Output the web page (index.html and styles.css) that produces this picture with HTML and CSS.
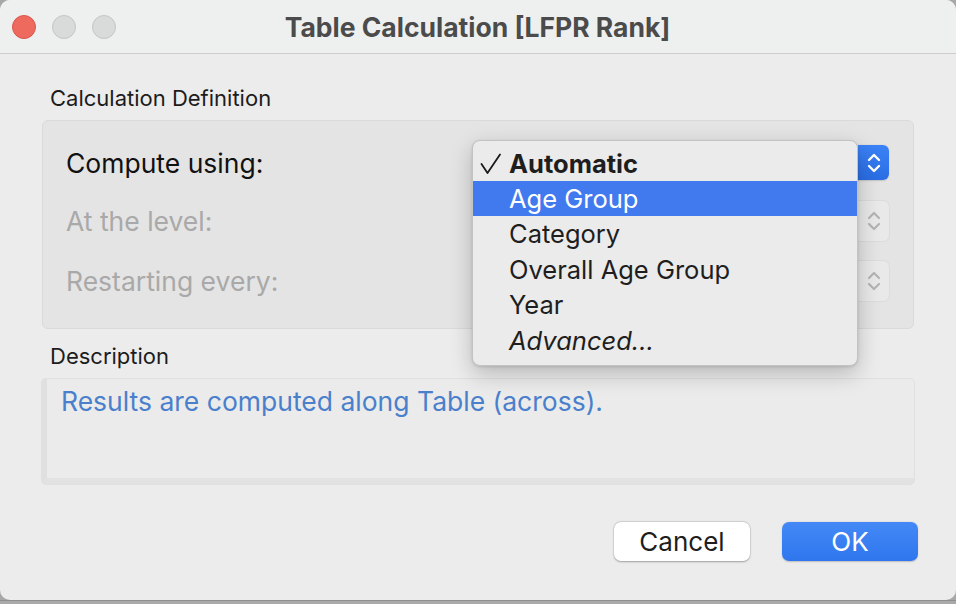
FILE: index.html
```html
<!DOCTYPE html>
<html>
<head>
<meta charset="utf-8">
<link rel="stylesheet" href="styles.css">
</head>
<body>
<div class="window">
  <div class="titlebar">
    <div class="lights">
      <span class="light red"></span>
      <span class="light"></span>
      <span class="light"></span>
    </div>
    <div class="title">Table Calculation [LFPR Rank]</div>
  </div>
  <div class="content">
    <div class="section-label">Calculation Definition</div>
    <div class="panel">
      <div class="row row-first">
        <div class="label">Compute using:</div>
        <div class="popup">
          <div class="stepper active">
            <svg width="16" height="24" viewBox="0 0 16 24"><path d="M3 9 L8 4 L13 9 M3 15 L8 20 L13 15" fill="none" stroke="#fff" stroke-width="2.4" stroke-linecap="round" stroke-linejoin="round"/></svg>
          </div>
        </div>
      </div>
      <div class="row">
        <div class="label disabled">At the level:</div>
        <div class="popup tall">
          <div class="stepper">
            <svg width="16" height="24" viewBox="0 0 16 24"><path d="M3 9 L8 4 L13 9 M3 15 L8 20 L13 15" fill="none" stroke="#b4b4b4" stroke-width="2.2" stroke-linecap="round" stroke-linejoin="round"/></svg>
          </div>
        </div>
      </div>
      <div class="row">
        <div class="label disabled">Restarting every:</div>
        <div class="popup tall">
          <div class="stepper">
            <svg width="16" height="24" viewBox="0 0 16 24"><path d="M3 9 L8 4 L13 9 M3 15 L8 20 L13 15" fill="none" stroke="#b4b4b4" stroke-width="2.2" stroke-linecap="round" stroke-linejoin="round"/></svg>
          </div>
        </div>
      </div>
    </div>
    <div class="section-label desc-label">Description</div>
    <div class="desc-box">Results are computed along Table (across).</div>
    <div class="buttons">
      <button class="btn cancel">Cancel</button>
      <button class="btn ok">OK</button>
    </div>
  </div>
  <div class="menu">
    <div class="item checked">
      <svg class="check" width="22" height="22" viewBox="0 0 22 22"><path d="M1.5 11 L7.5 20 L20 1.5" fill="none" stroke="#1a1a1a" stroke-width="1.8" stroke-linecap="round" stroke-linejoin="round"/></svg>
      <span>Automatic</span>
    </div>
    <div class="item selected">Age Group</div>
    <div class="item">Category</div>
    <div class="item">Overall Age Group</div>
    <div class="item">Year</div>
    <div class="item italic">Advanced...</div>
  </div>
</div>
<div class="backdrop"></div>
</body>
</html>
```

FILE: styles.css
```css
html, body {
  margin: 0;
  padding: 0;
}
body {
  width: 956px;
  height: 604px;
  background: #a7a7a7;
  overflow: hidden;
  font-family: "Inter", "Noto Sans", sans-serif;
}
.window {
  position: relative;
  width: 956px;
  height: 600px;
  background: #ececec;
  border-radius: 10px;
  overflow: hidden;
  display: flex;
  flex-direction: column;
}
.backdrop {
  height: 4px;
  border-top: 1px solid #8e8e8e;
  background: #a9a9a9;
}
.titlebar {
  height: 53px;
  flex: none;
  background: #eef0f0;
  border-bottom: 1px solid #cdcdcd;
  display: flex;
  align-items: center;
  position: relative;
}
.lights {
  display: flex;
  gap: 16px;
  padding-left: 12px;
}
.light {
  width: 22px;
  height: 22px;
  border-radius: 50%;
  background: #d9dbdb;
  border: 1px solid #c4c6c6;
}
.light.red {
  background: #ee6a5e;
  border-color: #d9564b;
}
.title {
  flex: 1;
  text-align: center;
  margin-right: 117px;
  font-size: 26.5px;
  font-weight: 700;
  color: #4b4b4b;
}
.content {
  flex: 1;
  display: flex;
  flex-direction: column;
  padding: 0 42px 0 42px;
}
.section-label {
  font-size: 22px;
  color: #1c1c1c;
  padding-left: 8px;
  margin-top: 32px;
  height: 24px;
  line-height: 24px;
}
.panel {
  margin-top: 10px;
  height: 209px;
  box-sizing: border-box;
  background: #e4e4e4;
  border: 1px solid #dadada;
  border-radius: 6px;
  padding: 24px 24px 0 23px;
  display: flex;
  flex-direction: column;
  gap: 20px;
}
.row {
  display: flex;
  align-items: center;
  justify-content: space-between;
}
.row-first {
  margin-bottom: 1px;
}
.label {
  font-size: 26.5px;
  line-height: 30px;
  color: #111;
}
.label.disabled {
  color: #a9a9a9;
}
.popup {
  width: 410px;
  height: 35px;
  background: #ebebeb;
  border-radius: 6px;
  display: flex;
  justify-content: flex-end;
  box-shadow: 0 0.5px 1.5px rgba(0,0,0,0.15);
}
.popup.tall {
  height: 40px;
  background: #e9e9e9;
  box-shadow: 0 0 0 1px #dcdcdc;
}
.stepper {
  width: 31px;
  display: flex;
  align-items: center;
  justify-content: center;
  border-radius: 0 6px 6px 0;
}
.stepper.active {
  background: linear-gradient(#3b82f6, #2a6de4);
}
.desc-label {
  margin-top: 15px;
}
.desc-box {
  margin-top: 11px;
  height: 105px;
  box-sizing: border-box;
  background: #ebebeb;
  border-radius: 4px;
  border-left: 5px solid #e0e0e0;
  border-bottom: 6px solid #e2e2e2;
  box-shadow: 0 0 0 1px #e0e0e0;
  padding: 6px 14px;
  font-size: 26.5px;
  color: #4a80cb;
  line-height: 32px;
}
.buttons {
  margin-top: 38px;
  display: flex;
  justify-content: flex-end;
  gap: 32px;
  margin-right: -4px;
}
.btn {
  width: 136px;
  height: 39px;
  border: none;
  border-radius: 7px;
  font-family: "Inter", "Noto Sans", sans-serif;
  font-size: 26px;
  padding: 0;
}
.cancel {
  background: #fff;
  color: #1e1e1e;
  box-shadow: 0 0.5px 2px rgba(0,0,0,0.3), 0 0 0 0.5px rgba(0,0,0,0.08);
}
.ok {
  background: linear-gradient(#4489f6, #2f76ee);
  color: #fff;
  box-shadow: 0 0.5px 1.5px rgba(0,0,0,0.2);
}
.menu {
  position: absolute;
  left: 472px;
  top: 140px;
  width: 386px;
  box-sizing: border-box;
  padding: 4px 0 6px;
  background: #ebebeb;
  border: 1px solid #c3c3c3;
  border-radius: 8px;
  box-shadow: 0 8px 22px rgba(0,0,0,0.22), 0 1px 3px rgba(0,0,0,0.12);
}
.item {
  height: 35.6px;
  line-height: 36.6px;
  padding-left: 36px;
  font-size: 25.5px;
  color: #1e1e1e;
  position: relative;
}
.item.checked {
  line-height: 38px;
}
.item.checked span {
  font-weight: 700;
}
.check {
  position: absolute;
  left: 7px;
  top: 8px;
}
.item.selected {
  background: #4179ef;
  color: #fff;
}
.item.italic {
  font-style: italic;
}
```
